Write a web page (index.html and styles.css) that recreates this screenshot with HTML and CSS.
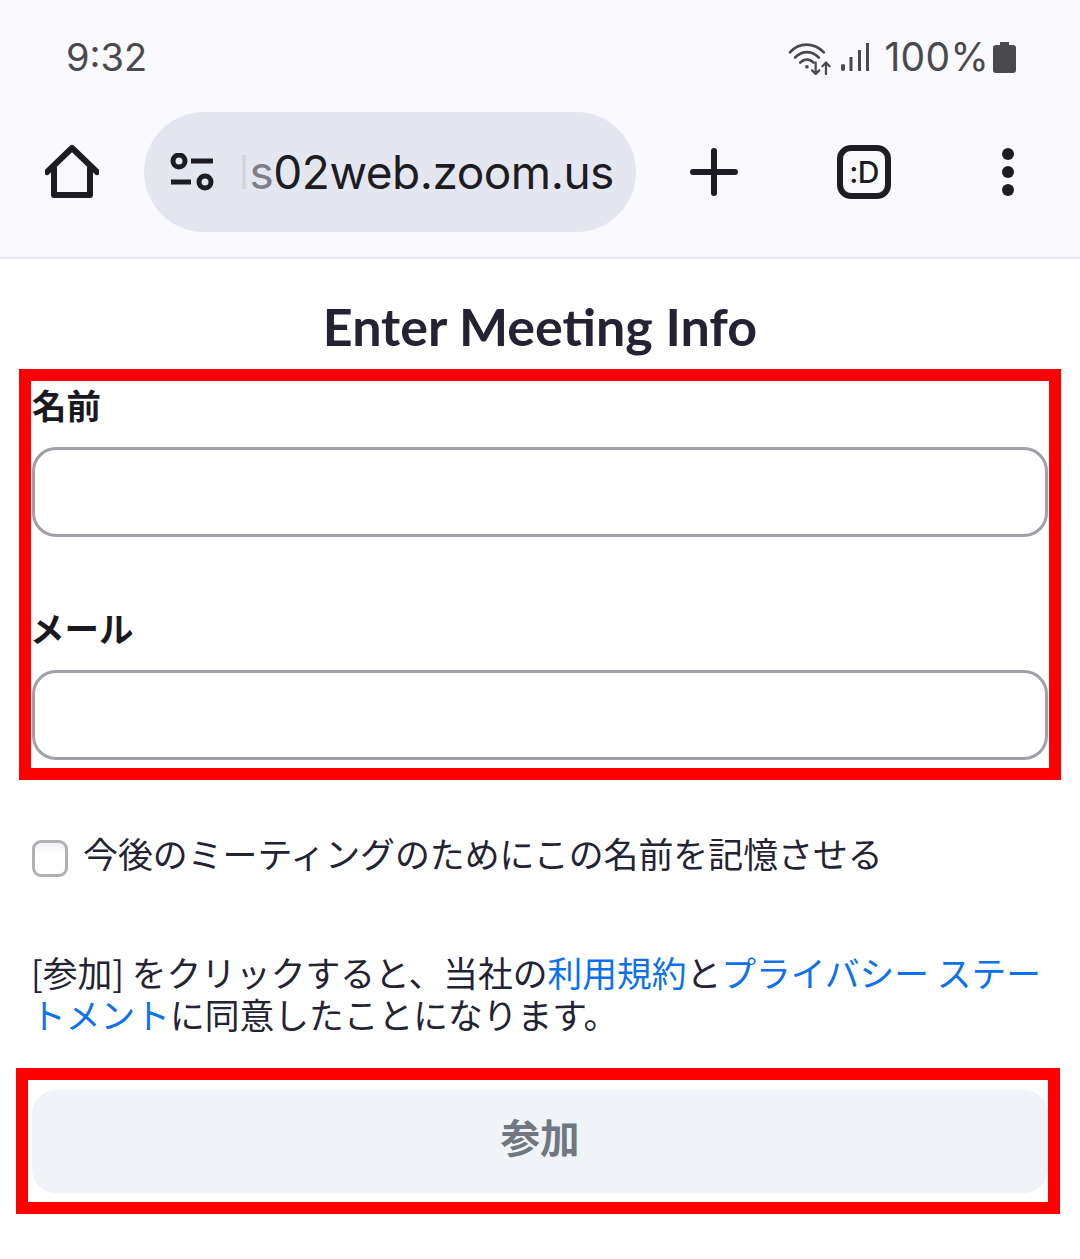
FILE: index.html
```html
<!DOCTYPE html>
<html lang="ja">
<head>
<meta charset="utf-8">
<title>Enter Meeting Info</title>
<link rel="stylesheet" href="styles.css">
</head>
<body>
<header class="chrome">
  <div class="status">
    <span class="clock">9:32</span>
    <div class="status-right">
      <svg class="wifi" width="44" height="34" viewBox="1 1 41 33" fill="none" stroke="#4a4a4e" stroke-linecap="round">
        <path d="M2 12C11 2 25 2 35 12" stroke-width="2.6"/>
        <path d="M7 17C14 10 23 10 30 17" stroke-width="2.6"/>
        <path d="M12 22C16 18 21 18 25 22" stroke-width="2.6"/>
        <circle cx="18.5" cy="26" r="1.8" fill="#4a4a4e" stroke="none"/>
        <path d="M27 22V33M23.500 29.500L27 33L30.500 29.500M37 33V22M33.500 25.500L37 22L40.500 25.500" stroke-width="2.200"/>
      </svg>
      <svg class="signal" width="28" height="30" viewBox="0 0 28 30" fill="#4a4a4e">
        <rect x="0" y="22" width="4" height="7" rx="2"/>
        <rect x="8.500" y="15" width="3" height="14"/>
        <rect x="17" y="8" width="3" height="21"/>
        <rect x="25" y="1" width="3" height="28"/>
      </svg>
      <span class="battery-text">100%</span>
      <svg class="battery" width="23" height="31" viewBox="0 0 23 31" fill="#4a4a4e">
        <path d="M7 0H16V3H20Q23 3 23 6V28Q23 31 20 31H3Q0 31 0 28V6Q0 3 3 3H7Z"/>
      </svg>
    </div>
  </div>
  <div class="toolbar">
    <svg class="home" width="54" height="54" viewBox="0 0 54 54" fill="none" stroke="#1c1c22" stroke-width="6" stroke-linejoin="round" stroke-linecap="round">
      <path d="M2 27L27 3L52 27M9 23V50H45V23"/>
    </svg>
    <div class="omnibox">
      <svg class="tune" width="46" height="38" viewBox="0 0 44 38" fill="none" stroke="#1c1c22" stroke-width="5">
        <circle cx="8" cy="8" r="6"/>
        <path d="M20 8H42M0 29H20"/>
        <circle cx="34" cy="29" r="6"/>
      </svg>
      <span class="url">
        <span class="url-fade">I</span><span class="url-fade-s">s</span>02web.zoom.us
      </span>
    </div>
    <svg class="plus" width="48" height="48" viewBox="0 0 48 48" fill="none" stroke="#1c1c22" stroke-width="6" stroke-linecap="round">
      <path d="M24 3V45M3 24H45"/>
    </svg>
    <div class="tab-count">:D</div>
    <div class="kebab"><span></span><span></span><span></span></div>
  </div>
</header>

<main>
  <h1 class="title">Enter Meeting Info</h1>
  <section class="mark mark-fields">
    <label class="field-label">名前</label>
    <input class="field" type="text">
    <label class="field-label second">メール</label>
    <input class="field" type="text">
  </section>
  <div class="remember">
    <span class="checkbox"></span>
    <span>今後のミーティングのためにこの名前を記憶させる</span>
  </div>
  <p class="terms">[参加] をクリックすると、当社の<a>利用規約</a>と<a>プライバシー ステートメント</a>に同意したことになります。</p>
  <section class="mark mark-button">
    <div class="join">参加</div>
  </section>
</main>
</body>
</html>
```
FILE: styles.css
```css
* { box-sizing: border-box; }
html, body { margin: 0; padding: 0; }
body {
  width: 1080px;
  height: 1259px;
  overflow: hidden;
  background: #fff;
  font-family: "Noto Sans CJK JP", "Noto Sans", sans-serif;
  color: #232333;
}
.chrome {
  height: 259px;
  background: #f9f9fe;
  border-bottom: 2px solid #e4e5ec;
}
.status {
  height: 112px;
  padding: 34px 64px 0 66px;
  display: flex;
  justify-content: space-between;
  align-items: flex-start;
  font-family: Inter, Roboto, sans-serif;
  color: #4a4a4e;
}
.clock { font-size: 38px; line-height: 46px; font-weight: 400; }
.status-right { display: flex; align-items: center; height: 46px; }
.wifi { margin-right: 9px; margin-top: 2px; }
.signal { margin-right: 15px; }
.battery-text { font-size: 39px; line-height: 46px; letter-spacing: 0.3px; margin-right: 4px; }
.toolbar {
  height: 120px;
  display: flex;
  align-items: center;
  padding-left: 45px;
}
.home { flex: none; margin-right: 45px; }
.omnibox {
  width: 492px;
  height: 120px;
  border-radius: 60px;
  background: #e5e7f0;
  display: flex;
  align-items: center;
  padding-left: 26px;
  overflow: hidden;
  flex: none;
}
.tune { flex: none; margin-right: 22px; }
.url {
  font-family: Inter, Roboto, sans-serif;
  font-size: 46px;
  color: #1c1c22;
  white-space: nowrap;
  letter-spacing: -0.5px;
}
.url-fade { color: #d3d4da; font-weight: 300; }
.url-fade-s { color: #7d7e86; }
.plus { flex: none; margin-left: 54px; }
.tab-count {
  flex: none;
  width: 54px;
  height: 54px;
  margin-left: 99px;
  border: 6px solid #1c1c22;
  border-radius: 14px;
  display: flex;
  align-items: center;
  justify-content: center;
  font-family: Inter, Roboto, sans-serif;
  font-size: 30px;
  font-weight: 500;
  letter-spacing: -0.5px;
  color: #1c1c22;
}
.kebab {
  flex: none;
  margin-left: 111px;
  display: flex;
  flex-direction: column;
  gap: 6px;
}
.kebab span {
  display: block;
  width: 12px;
  height: 12px;
  border-radius: 50%;
  background: #1c1c22;
}
main { display: block; }
.title {
  margin: 0;
  height: 110px;
  padding-top: 35px;
  text-align: center;
  font-family: Lato, sans-serif;
  font-size: 52px;
  line-height: 64px;
  font-weight: 700;
  color: #232333;
}
.mark { border-style: solid; border-color: #ff0000; border-width: 12px; }
.mark-fields {
  margin-left: 19px;
  width: 1042px;
  height: 411px;
  padding: 0 1px;
}
.field-label {
  display: block;
  font-size: 34.500px;
  line-height: 46px;
  font-weight: 700;
  color: #1a1a1e;
  height: 66px;
}
.field-label.second { margin-top: 67px; height: 66px; margin-left: -2px; }
.field {
  display: block;
  width: 100%;
  height: 90px;
  border: 3px solid #9ea1a8;
  border-radius: 24px;
  background: #fff;
  outline: none;
}
.remember {
  margin: 49px 0 0 32px;
  display: flex;
  align-items: center;
  gap: 15px;
  font-size: 34.900px;
  line-height: 48px;
  color: #232333;
}
.checkbox {
  width: 36px;
  height: 37px;
  margin-top: 11px;
  border: 3px solid #b0b1b5;
  border-radius: 9px;
  background: linear-gradient(#f1f1f3, #fff 40%);
  flex: none;
}
.terms {
  margin: 74px 32px 0 31px;
  font-size: 34.750px;
  line-height: 42px;
  color: #232333;
}
.terms a { color: #0e71eb; }
.mark-button {
  margin: 33px 0 0 16px;
  width: 1044px;
  height: 146px;
  padding: 10px 0 9px 4px;
}
.join {
  width: 1016px;
  height: 103px;
  padding-bottom: 13px;
  border-radius: 24px;
  background: #f0f3f7;
  display: flex;
  align-items: center;
  justify-content: center;
  font-size: 39.500px;
  font-weight: 700;
  color: #6f7780;
}
```
